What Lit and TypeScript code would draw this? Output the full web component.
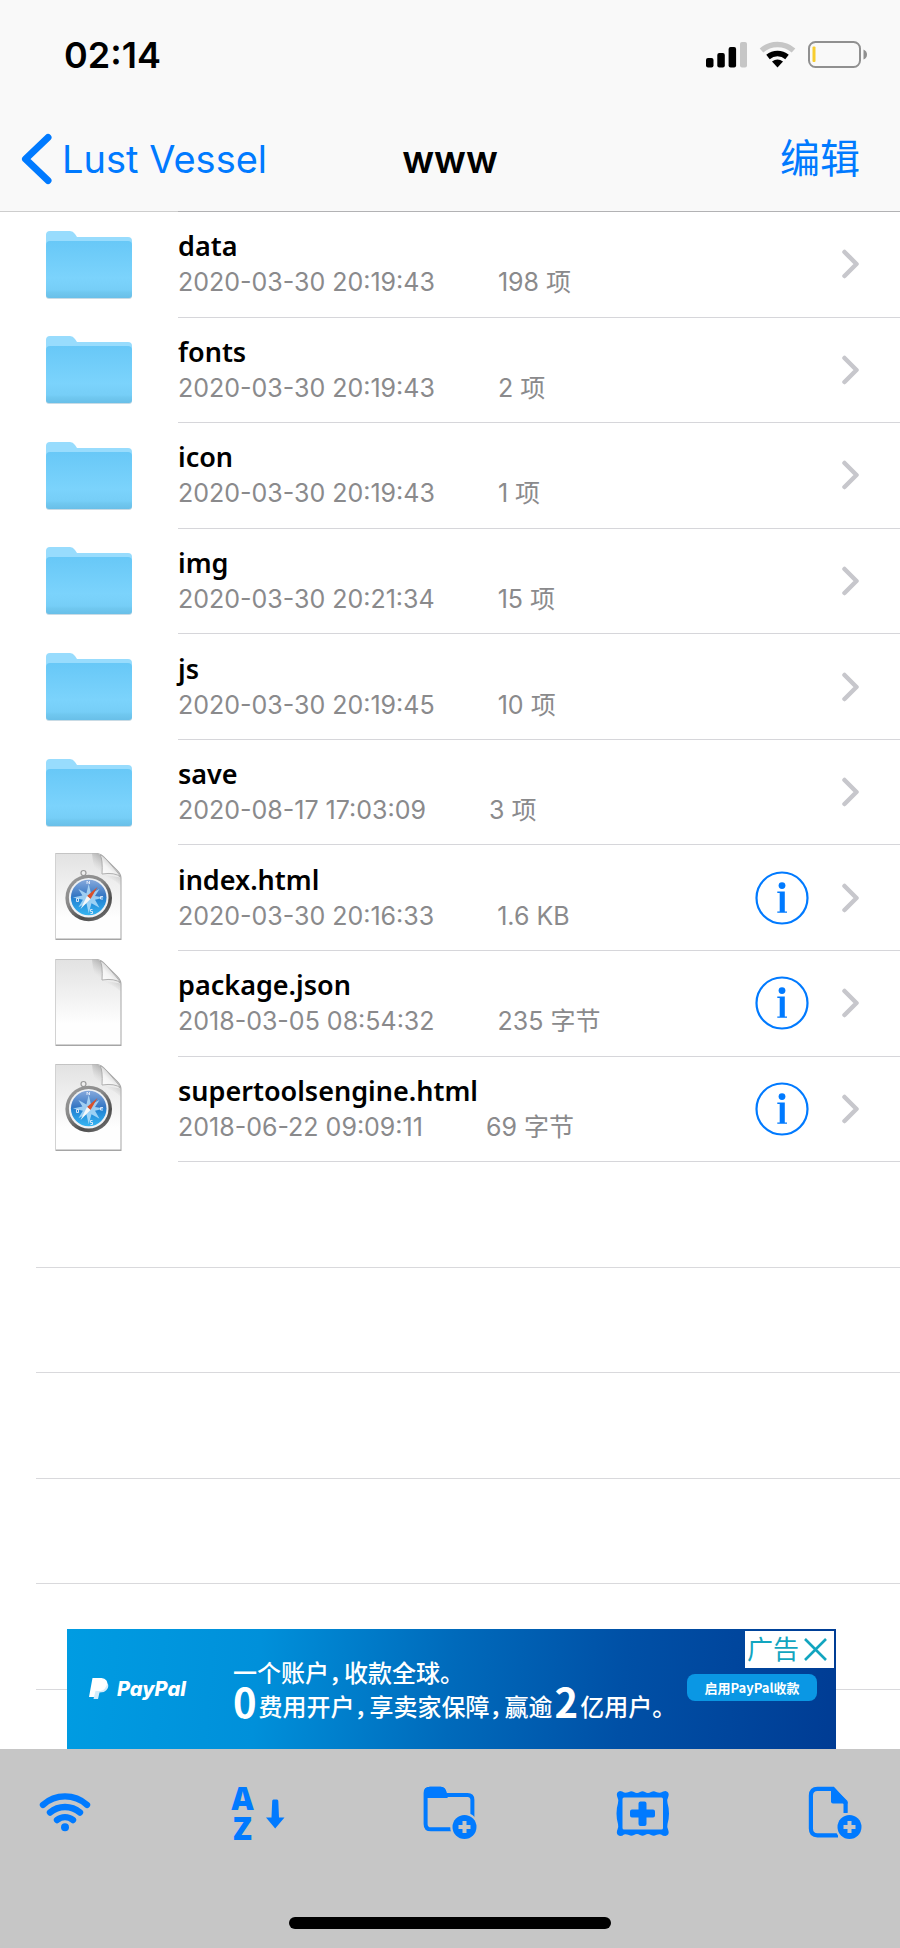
import { LitElement, html, css, svg } from "lit";
import { customElement, property } from "lit/decorators.js";

type Kind = "folder" | "html" | "file";

interface Entry {
  name: string;
  date: string;
  size: string;
  kind: Kind;
}

const ENTRIES: Entry[] = [
  { name: "data", date: "2020-03-30 20:19:43", size: "198 项", kind: "folder" },
  { name: "fonts", date: "2020-03-30 20:19:43", size: "2 项", kind: "folder" },
  { name: "icon", date: "2020-03-30 20:19:43", size: "1 项", kind: "folder" },
  { name: "img", date: "2020-03-30 20:21:34", size: "15 项", kind: "folder" },
  { name: "js", date: "2020-03-30 20:19:45", size: "10 项", kind: "folder" },
  { name: "save", date: "2020-08-17 17:03:09", size: "3 项", kind: "folder" },
  { name: "index.html", date: "2020-03-30 20:16:33", size: "1.6 KB", kind: "html" },
  { name: "package.json", date: "2018-03-05 08:54:32", size: "235 字节", kind: "file" },
  { name: "supertoolsengine.html", date: "2018-06-22 09:09:11", size: "69 字节", kind: "html" },
];

const EMPTY_ROWS = [0, 1, 2, 3, 4];

const folderIcon = html`
  <svg width="88" height="72" viewBox="0 0 88 72" aria-hidden="true">
    <defs>
      <linearGradient id="front" x1="0" y1="0" x2="0" y2="1">
        <stop offset="0" stop-color="#68c8f7" />
        <stop offset="0.65" stop-color="#7bd3fc" />
        <stop offset="0.86" stop-color="#76cef7" />
        <stop offset="0.9" stop-color="#70c8f0" />
        <stop offset="1" stop-color="#69bfe8" />
      </linearGradient>
    </defs>
    <rect x="1" y="62" width="86" height="8" rx="3" fill="#c9dbe5" />
    <path d="M1 6a4 4 0 0 1 4-4h20q3 0 5 3l2 3h51a4 4 0 0 1 4 4v40H1z" fill="#98dcfd" />
    <path d="M1 16a4 4 0 0 1 4-4h78a4 4 0 0 1 4 4v50a3 3 0 0 1-3 3H4a3 3 0 0 1-3-3z" fill="url(#front)" />
  </svg>
`;

const compass = svg`
  <circle cx="29.500" cy="21" r="2.500" fill="#eee" stroke="#999" stroke-width="1.200" />
  <circle cx="34.700" cy="46" r="23.300" fill="url(#rim)" />
  <circle cx="34.700" cy="45.700" r="19.800" fill="#eef1f4" />
  <circle cx="34.700" cy="45.500" r="17.800" fill="url(#sea)" />
  <path d="M34.700 32l2.300 9.500 8.500-4.500-4.500 7 9 1.500-9 2.300 4.500 8-8-4.500-2.800 10-2.300-10-8 4 4.500-7.500-10-2.300 9.500-2-4-6.500 8 4.500z" fill="#b9e2fb" opacity="0.800" />
  <path d="M43.500 35l-7 12-3.500-3z" fill="#d9502a" />
  <path d="M26.500 57l6.500-13 3.500 3z" fill="#f5f8fa" />
  <path d="M33 32v-3l2.500 3v-3M49 44.500h-2.500v2.500h2.500M22.500 46.500v3h2v-3zM38.500 57.500h-2v2h2v2h-2" fill="none" stroke="#e4ecfb" stroke-width="0.900" />
`;

const pageIcon = (kind: Kind) => html`
  <svg width="70" height="90" viewBox="0 1 70 90" aria-hidden="true">
    <defs>
      <linearGradient id="paper" x1="0" y1="0" x2="0" y2="1">
        <stop offset="0" stop-color="#e2e2e2" />
        <stop offset="0.5" stop-color="#f4f4f4" />
        <stop offset="0.75" stop-color="#fefefe" />
      </linearGradient>
      <linearGradient id="curl" x1="0" y1="1" x2="0.6" y2="0.3">
        <stop offset="0" stop-color="#ffffff" />
        <stop offset="0.6" stop-color="#f4f4f4" />
        <stop offset="1" stop-color="#cfcfcf" />
      </linearGradient>
      <linearGradient id="shade" x1="1" y1="0" x2="0.35" y2="0.9">
        <stop offset="0.3" stop-color="#777" stop-opacity="0.75" />
        <stop offset="0.8" stop-color="#aaa" stop-opacity="0" />
      </linearGradient>
      <linearGradient id="rim" x1="0" y1="0" x2="0.7" y2="1">
        <stop offset="0" stop-color="#9c9c9c" />
        <stop offset="0.45" stop-color="#8a8a8a" />
        <stop offset="0.8" stop-color="#4c4c4c" />
        <stop offset="1" stop-color="#6a6a6a" />
      </linearGradient>
      <linearGradient id="sea" x1="0" y1="0" x2="0" y2="1">
        <stop offset="0" stop-color="#86a9dc" />
        <stop offset="0.45" stop-color="#3677c4" />
        <stop offset="0.55" stop-color="#2384d4" />
        <stop offset="1" stop-color="#35b5f2" />
      </linearGradient>
    </defs>
    <path d="M1.500 1h42q5 1 8 5l12 12q4 4 4 8v62h-66z" fill="#8f8f8f" opacity="0.800" />
    <path d="M2 1.500h41.500q5 1 7.500 5l11.500 12q4 4 4 8v60h-64.500z" fill="url(#paper)" />
    <path d="M38 1.500h6l4 3v18l18.500 3v8q-8.500-9-18.500-8-8-2-10-24z" fill="url(#shade)" opacity="0.800" />
    <path d="M46 2.500q3 5 2 19.500 13-2 18.500 3-2-4-5-7L52 7q-3-3-6-4.500z" fill="url(#curl)" stroke="#a8a8a8" stroke-width="0.900" />
    ${kind === "html" ? compass : null}
  </svg>
`;

@customElement("file-row")
export class FileRow extends LitElement {
  @property({ attribute: false }) entry!: Entry;

  static styles = css`
    :host {
      display: flex;
      height: 100%;
    }
    .thumb {
      flex: none;
      width: 178px;
      display: flex;
      align-items: center;
      justify-content: center;
    }
    .content {
      flex: 1;
      min-width: 0;
      display: flex;
      align-items: center;
      padding-right: 41px;
      border-bottom: 1px solid #d6d6da;
    }
    .link {
      flex: 1;
      min-width: 0;
      color: inherit;
      text-decoration: none;
    }
    .name {
      display: block;
      font: 600 27px/36px "Noto Sans", "Open Sans", sans-serif;
      color: #000;
    }
    .meta {
      display: flex;
      gap: 63px;
      font: 400 25px/36px Inter, "Noto Sans CJK SC", sans-serif;
      color: #8a8a8c;
      white-space: nowrap;
    }
    .info {
      flex: none;
      margin: 0 32px 0 0;
      padding: 0;
      border: 0;
      background: none;
      color: #007aff;
    }
    svg {
      display: block;
    }
  `;

  render() {
    const { name, date, size, kind } = this.entry;
    return html`
      <span class="thumb">${kind === "folder" ? folderIcon : pageIcon(kind)}</span>
      <div class="content">
        <a class="link" href="#${name}">
          <span class="name">${name}</span>
          <span class="meta"><span>${date}</span><span>${size}</span></span>
        </a>
        ${kind === "folder"
          ? null
          : html`<button class="info" type="button" aria-label="${name}">
              <svg width="54" height="54" viewBox="0 0 54 54" aria-hidden="true">
                <circle cx="27" cy="27" r="25.500" fill="none" stroke="currentColor" stroke-width="2.200" />
                <circle cx="27" cy="14.600" r="3.400" fill="currentColor" />
                <path d="M22.300 20.500h7.500v20h2.200v1.300h-9.700v-1.300h2.400V22h-2.400z" fill="currentColor" />
              </svg>
            </button>`}
        <svg width="18" height="32" viewBox="0 0 18 32" aria-hidden="true">
          <path d="M3.500 4l12 12-12 12" fill="none" stroke="#c7c7cc" stroke-width="4.500" stroke-linecap="round" stroke-linejoin="round" />
        </svg>
      </div>
    `;
  }
}

@customElement("ad-banner")
export class AdBanner extends LitElement {
  static styles = css`
    :host {
      display: grid;
      grid-template-columns: 166px 1fr 150px;
      align-items: center;
      height: 120px;
      color: #fff;
      background: linear-gradient(95deg, #009ce2 0%, #0090da 25%, #006abb 50%, #0050a6 72%, #003c94 100%);
      font-family: "Noto Sans CJK SC", sans-serif;
    }
    .brand {
      display: flex;
      align-items: center;
      gap: 8px;
      padding-left: 22px;
      font: italic 800 20px/24px Inter, sans-serif;
    }
    .copy {
      font-size: 24px;
      font-weight: 500;
      white-space: nowrap;
    }
    .line {
      margin: 0;
      line-height: 34px;
      font-feature-settings: "halt";
    }
    .comma {
      margin-right: 3px;
    }
    .big {
      font-size: 40px;
      font-weight: 700;
      margin-right: 2px;
      line-height: 0;
      vertical-align: -2px;
    }
    .two {
      margin-left: 2px;
    }
    .side {
      align-self: stretch;
      display: flex;
      flex-direction: column;
      align-items: flex-end;
      gap: 6px;
      padding: 2px 2px 0 0;
    }
    .label {
      display: flex;
      align-items: center;
      gap: 4px;
      height: 37px;
      padding: 0 6px 0 2px;
      border: 0;
      background: #fff;
      color: #12a5bf;
      font: 400 26px/36px Inter, "Noto Sans CJK SC", sans-serif;
    }
    .cta {
      width: 130px;
      height: 27px;
      margin-right: 17px;
      padding: 0;
      border: 0;
      border-radius: 8px;
      background: #0a97e4;
      color: #fff;
      font: 700 13px/26px "Noto Sans CJK SC", sans-serif;
    }
    svg {
      display: block;
    }
  `;

  render() {
    const comma = html`<span class="comma">，</span>`;
    return html`
      <div class="brand">
        <svg width="20" height="22" viewBox="0 0 20 22" aria-hidden="true">
          <path d="M3.500 0h9q6.500 1 6 7-1 6-7 6.500h-4L6 19H0z" fill="#fff" />
          <path d="M18.500 5q2 4-1 7-2 2.500-7 2.500L9 21H4.500l2-8h5q5-.500 7-8z" fill="#d3ecfb" />
        </svg>
        <span>PayPal</span>
      </div>
      <div class="copy">
        <p class="line">一个账户${comma}收款全球。</p>
        <p class="line"><span class="big">0</span>费用开户${comma}享卖家保障${comma}赢逾<span class="big two">2</span>亿用户。</p>
      </div>
      <div class="side">
        <button class="label" type="button">
          <span>广告</span>
          <svg width="25" height="25" viewBox="0 0 25 25" aria-hidden="true">
            <path d="M2 2l21 21M23 2L2 23" stroke="currentColor" stroke-width="2.600" />
          </svg>
        </button>
        <button class="cta" type="button">启用PayPal收款</button>
      </div>
    `;
  }
}

const badge = svg`
  <circle cx="41.500" cy="41" r="14.300" fill="#c6c6c6" />
  <circle cx="41.500" cy="41" r="12" fill="currentColor" />
  <path d="M41.500 35v12M35.500 41h12" stroke="#c6c6c6" stroke-width="4" />
`;

const TOOLS = [
  {
    label: "Wi-Fi",
    art: svg`
      <g fill="none" stroke="currentColor" stroke-width="6.400" stroke-linecap="round">
        <path d="M5 18.800a33 33 0 0 1 44 0M12 26.500a23 23 0 0 1 30 0M19 34a12.500 12.500 0 0 1 16 0" />
      </g>
      <circle cx="27" cy="41.300" r="4" fill="currentColor" />`,
  },
  {
    label: "Sort",
    art: svg`
      <g class="glyph" fill="currentColor" text-anchor="middle">
        <text x="11.500" y="24">A</text>
        <text x="11.500" y="53.500">Z</text>
      </g>
      <path d="M42.500 13.500h3.500q1.200 0 1.300 1.500l.700 16.500h5.500l-9.300 11-9.200-11h5.500l.700-16.500q0-1.500 1.300-1.500z" fill="currentColor" />`,
  },
  {
    label: "New folder",
    art: svg`
      <path d="M2.600 10V7q0-4.200 4.200-4.200h11Q21 2.800 22 8.900h22.500q4.900 0 4.900 4.900v25q0 4.500-4.900 4.500H8q-5.400 0-5.400-5.400z" fill="none" stroke="currentColor" stroke-width="4" />
      <path d="M1 12V7q0-6.200 6.200-6.200h10.500q5 0 6 6.200l1 5z" fill="currentColor" />
      ${badge}`,
  },
  {
    label: "Add photo",
    art: svg`
      <path fill-rule="evenodd" fill="currentColor" d="M4 5q2.500 0 4 1.500 2 .500 5-.500 2-1.500 5 0 3 2 6 0 2.500-1.500 5 0 3 2 6 0 3-1.500 5 0 3 1 5 .500Q47 5 49.500 5q4 1 3 5-2 4-1 7 1.500 5 1.500 10.500T51.500 38q-1 3 1 7 1 4-3 5-2.500 0-4.500-1.500-2-.500-5 .500-2 1.500-5 0-3-2-6 0-2.500 1.500-5 0-3-2-6 0-3 1.500-5 0-3-1-5-.500Q6.500 50 4 50q-4-1-3-5 2-4 1-7Q.500 33 .500 27.500T2 17q1-3-1-7-1-4 3-5zM8 11.500q-1.500 0-1.500 1.500v29q0 1.500 1.500 1.500h37.500q1.500 0 1.500-1.500V13q0-1.500-1.500-1.500z" />
      <path d="M24.500 15.500h4q2 0 2 2v6H37q2 0 2 2v4q0 2-2 2h-6.500V38q0 2-2 2h-4q-2 0-2-2v-6.500H16q-2 0-2-2v-4q0-2 2-2h6.500v-6q0-2 2-2z" fill="currentColor" />`,
  },
  {
    label: "New file",
    art: svg`
      <path d="M37.600 27V17L25 2.900H9.500Q2.900 2.900 2.900 9.500v33q0 6.800 6.600 6.800H30" fill="none" stroke="currentColor" stroke-width="4.200" />
      <path d="M23 2h3.500L39.500 15v2.500H25q-2 0-2-2z" fill="currentColor" />
      ${badge}`,
  },
];

@customElement("app-root")
export class AppRoot extends LitElement {
  static styles = css`
    :host {
      display: flex;
      flex-direction: column;
      min-height: 100vh;
      background: #fff;
      color: #000;
      font-family: Inter, "Noto Sans CJK SC", sans-serif;
    }
    .header {
      background: #f9f9f9;
    }
    .header::after {
      content: "";
      display: block;
      height: 1px;
      background: linear-gradient(to right, #cdcdcd 178px, #b2b2b4 178px);
    }
    .status {
      display: flex;
      align-items: center;
      justify-content: space-between;
      height: 110px;
      padding: 0 32px 0 64px;
    }
    .time {
      font-size: 36px;
      font-weight: 600;
    }
    .nav {
      display: grid;
      grid-template-columns: 1fr auto 1fr;
      align-items: center;
      height: 98px;
      padding: 0 40px 3px 20px;
      font-size: 38px;
      line-height: 48px;
    }
    .back {
      display: flex;
      align-items: center;
      gap: 8px;
      color: #007aff;
      text-decoration: none;
      white-space: nowrap;
    }
    .title {
      margin: 0;
      padding-left: 20px;
      font-size: 38px;
      font-weight: 600;
    }
    .edit {
      justify-self: end;
      padding: 0;
      border: 0;
      background: none;
      color: #007aff;
      font: 400 40px/48px Inter, "Noto Sans CJK SC", sans-serif;
    }
    .main {
      flex: 1;
      position: relative;
      display: flex;
      flex-direction: column;
    }
    .list {
      flex: 1;
      display: grid;
      grid-auto-rows: 1fr;
      margin: 0;
      padding: 0 0 59px;
      list-style: none;
    }
    .empty {
      margin-left: 36px;
      border-bottom: 1px solid #d9d9dc;
    }
    .ad {
      position: absolute;
      bottom: 0;
      left: 67px;
      right: 64px;
    }
    .footer {
      background: #c6c6c6;
      padding: 37px 38px 19px;
    }
    .tools {
      display: flex;
      justify-content: space-between;
    }
    .tool {
      padding: 0;
      border: 0;
      background: none;
      color: #007aff;
    }
    .tool svg {
      overflow: visible;
    }
    .glyph {
      font: 800 31px "Open Sans", sans-serif;
    }
    .home {
      width: 322px;
      height: 12px;
      margin: 77px auto 0;
      border-radius: 6px;
      background: #000;
    }
    svg {
      display: block;
    }
  `;

  render() {
    return html`
      <header class="header">
        <div class="status">
          <span class="time">02:14</span>
          <svg width="162" height="28" viewBox="0 0 162 28" aria-hidden="true">
            <rect x="0" y="17" width="7.500" height="9.500" rx="2" />
            <rect x="11.300" y="12" width="7.500" height="14.500" rx="2" />
            <rect x="22.600" y="6" width="7.500" height="20.500" rx="2" />
            <rect x="34" y="1" width="7" height="25.500" rx="2" fill="#c6c6c6" />
            <path d="M55.500 9.500a24.500 24.500 0 0 1 32 0" fill="none" stroke="#c6c6c6" stroke-width="5.500" />
            <path d="M62 16a15 15 0 0 1 19 0" fill="none" stroke="#000" stroke-width="5.500" />
            <path d="M66 20.500q5.500-4 11 0l-5.500 6z" />
            <rect x="103" y="1" width="51" height="25" rx="6.500" fill="none" stroke="#909090" stroke-width="2" />
            <rect x="106.500" y="5.500" width="3" height="15.500" rx="1" fill="#f8cd2e" />
            <path d="M157.500 8.500q3.500 1.500 3.500 5t-3.500 5z" fill="#909090" />
          </svg>
        </div>
        <nav class="nav">
          <a class="back" href="#back">
            <svg width="34" height="54" viewBox="0 0 34 54" aria-hidden="true">
              <path d="M28 5.500L5.500 27 28 48.500" fill="none" stroke="currentColor" stroke-width="7" stroke-linecap="round" stroke-linejoin="round" />
            </svg>
            <span>Lust Vessel</span>
          </a>
          <h1 class="title">www</h1>
          <button class="edit" type="button">编辑</button>
        </nav>
      </header>
      <main class="main">
        <ul class="list">
          ${ENTRIES.map((entry) => html`<li><file-row .entry=${entry}></file-row></li>`)}
          ${EMPTY_ROWS.map(() => html`<li class="empty" aria-hidden="true"></li>`)}
        </ul>
        <ad-banner class="ad"></ad-banner>
      </main>
      <footer class="footer">
        <div class="tools">
          ${TOOLS.map(
            (tool) => html`<button class="tool" type="button" aria-label=${tool.label}>
              <svg width="54" height="54" viewBox="0 0 54 54" aria-hidden="true">${tool.art}</svg>
            </button>`
          )}
        </div>
        <div class="home"></div>
      </footer>
    `;
  }
}
